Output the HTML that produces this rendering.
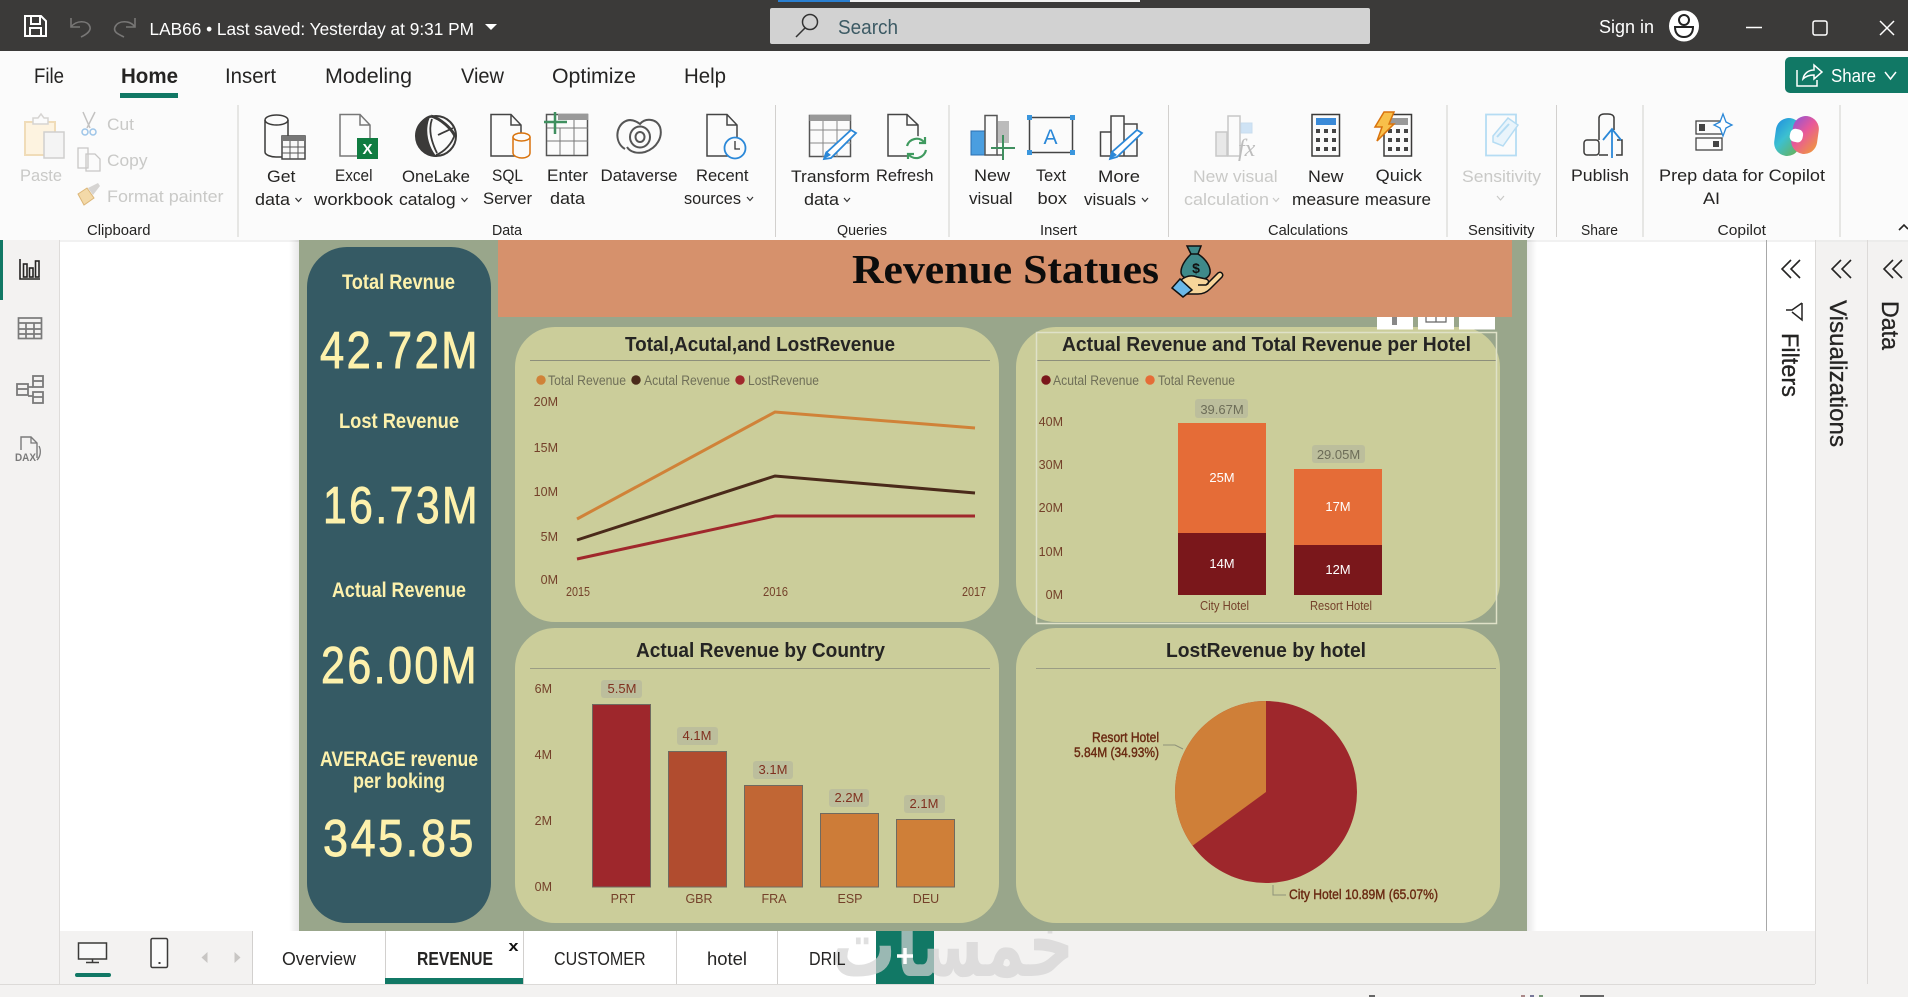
<!DOCTYPE html>
<html lang="en"><head><meta charset="utf-8"><title>LAB66 - Power BI</title>
<style>
html,body{margin:0;padding:0;width:1908px;height:997px;overflow:hidden;background:#f3f2f1}
svg{display:block;font-family:"Liberation Sans",sans-serif}
.rb{font-size:17px;fill:#252423}
.dis{font-size:17px;fill:#c9c9c7}
.gp{font-size:15px;fill:#252423}
.tab{font-size:21px;fill:#252423}
.kt{font-size:21px;font-weight:bold;fill:#fdf1ac}
.kv{font-size:52px;letter-spacing:3px;fill:#fdf1ac;stroke:#fdf1ac;stroke-width:.9}
.ct{font-size:20.5px;font-weight:bold;fill:#252423}
.lg{font-size:14px;fill:#6f6f58}
.ax{font-size:12.5px;fill:#74412a}
.dl{font-size:13px;fill:#80301f}
.ds{font-size:13px;fill:#6d6d58}
.wl{font-size:13px;fill:#fff}
.pl{font-size:13.5px;fill:#6a2a12;stroke:#6a2a12;stroke-width:.4}
.bt{font-size:18px;fill:#252423}
.vt{font-size:24px;fill:#252423;stroke:#252423;stroke-width:.3}
</style></head><body>
<svg width="1908" height="997" viewBox="0 0 1908 997" xmlns="http://www.w3.org/2000/svg">
<defs>
<linearGradient id="sl" x1="0" x2="1"><stop offset="0" stop-color="#000" stop-opacity="0"/><stop offset="1" stop-color="#000" stop-opacity=".09"/></linearGradient>
<linearGradient id="sr" x1="0" x2="1"><stop offset="0" stop-color="#000" stop-opacity=".09"/><stop offset="1" stop-color="#000" stop-opacity="0"/></linearGradient>
<linearGradient id="cp1" x1="0" y1="0" x2="1" y2="1"><stop offset="0" stop-color="#1f8fe0"/><stop offset=".45" stop-color="#3cc0d0"/><stop offset="1" stop-color="#6fb04a"/></linearGradient>
<linearGradient id="cp2" x1="0" y1="0" x2="1" y2="1"><stop offset="0" stop-color="#8a55d8"/><stop offset=".45" stop-color="#e8589a"/><stop offset="1" stop-color="#f0a030"/></linearGradient>
<clipPath id="wm"><rect x="800" y="931" width="300" height="50"/></clipPath>
</defs>

<!-- base regions -->
<rect width="1908" height="997" fill="#f3f2f1"/>
<rect x="60" y="240" width="1755" height="691" fill="#fff"/>
<rect x="1815" y="240" width="93" height="744" fill="#f3f2f1"/>

<!-- title bar -->
<rect width="1908" height="51" fill="#3b3a39"/>
<rect x="778" y="0" width="72" height="2" fill="#2a7fd0"/><rect x="850" y="0" width="290" height="2" fill="#f0f0f0"/>
<g fill="none" stroke="#fff" stroke-width="2">
<path d="M25 16H41L46 21V36H25Z"/><path d="M31 16V24H40V16"/><path d="M30 36V28H41V36"/>
</g>
<g fill="none" stroke="#787776" stroke-width="1.600">
<path d="M71 18V27H80"/><path d="M71 27C76 20 88 20 90 27C91 31 87 34 81 37"/>
<path d="M135 18V27H126"/><path d="M135 27C130 20 118 20 115 27C113 32 118 34 124 37"/>
</g>
<text x="149.500" y="35" font-size="17.500" fill="#fff" textLength="324.500" lengthAdjust="spacingAndGlyphs">LAB66 &#8226; Last saved: Yesterday at 9:31 PM</text>
<path d="M485 24H497L491 30Z" fill="#fff"/>
<rect x="770" y="8" width="600" height="36" rx="2" fill="#d2d2d2"/>
<g fill="none" stroke="#333" stroke-width="1.500"><circle cx="810" cy="22" r="7.500"/><path d="M805 28L796 37"/></g>
<text x="838" y="34" font-size="20" fill="#3c5a64" textLength="60" lengthAdjust="spacingAndGlyphs">Search</text>
<text x="1599" y="33" font-size="18" fill="#fff" textLength="55" lengthAdjust="spacingAndGlyphs">Sign in</text>
<ellipse cx="1684" cy="26" rx="15" ry="15.500" fill="#fff"/>
<circle cx="1684" cy="20" r="5" fill="none" stroke="#222" stroke-width="2"/><path d="M1675 27H1693C1693 34 1689 37 1684 37C1679 37 1675 34 1675 27Z" fill="none" stroke="#222" stroke-width="2"/>
<path d="M1746 27.500H1762" stroke="#fff" stroke-width="1.500"/>
<rect x="1813" y="21" width="14" height="14" rx="2" fill="none" stroke="#fff" stroke-width="1.500"/>
<path d="M1880 21L1894 35M1894 21L1880 35" stroke="#fff" stroke-width="1.500"/>

<!-- ribbon -->
<rect y="51" width="1908" height="189" fill="#fbfbfb"/>
<rect y="240" width="1908" height="2" fill="#e8e8e8" opacity=".6"/>
<text class="tab" x="34" y="83" textLength="30" lengthAdjust="spacingAndGlyphs">File</text>
<text class="tab" x="121" y="83" font-weight="bold" textLength="57" lengthAdjust="spacingAndGlyphs">Home</text>
<rect x="120" y="93" width="58" height="5" fill="#117865"/>
<text class="tab" x="225" y="83" textLength="51" lengthAdjust="spacingAndGlyphs">Insert</text>
<text class="tab" x="325" y="83" textLength="87" lengthAdjust="spacingAndGlyphs">Modeling</text>
<text class="tab" x="461" y="83" textLength="43" lengthAdjust="spacingAndGlyphs">View</text>
<text class="tab" x="552" y="83" textLength="84" lengthAdjust="spacingAndGlyphs">Optimize</text>
<text class="tab" x="684" y="83" textLength="42" lengthAdjust="spacingAndGlyphs">Help</text>
<path d="M1790 57H1908V93H1790A5 5 0 0 1 1785 88V62A5 5 0 0 1 1790 57Z" fill="#117865"/>
<path d="M1797 70V86H1817V80M1803 79C1804 73 1809 70 1814 70V65L1822 72L1814 79V75C1809 75 1806 76 1803 79Z" fill="none" stroke="#fff" stroke-width="1.500"/>
<text x="1831" y="82" font-size="18" fill="#fff" textLength="45" lengthAdjust="spacingAndGlyphs">Share</text>
<path d="M1885 72L1890.500 79L1896 72" fill="none" stroke="#fff" stroke-width="1.500"/>
<path d="M238 105V237M775.500 105V237M949 105V237M1168.500 105V237M1447 105V237M1556.500 105V237M1643 105V237M1840 105V237" stroke="#d2d0ce"/>

<!-- clipboard group -->
<rect x="25" y="122" width="30" height="33" fill="#fdf3e0" stroke="#f0dcb8" stroke-width="2"/>
<path d="M33 122V118H38L41 114L44 118H48V124H33Z" fill="#fbfbfb" stroke="#d6d4d2" stroke-width="1.500"/>
<rect x="44" y="132" width="20" height="26" fill="#f4f4f4" stroke="#d0cfce" stroke-width="1.500"/>
<path d="M83 112L90 128M95 112L87 128" stroke="#c3c2c1" stroke-width="1.500"/>
<circle cx="85" cy="132" r="3" fill="none" stroke="#9ec5e8" stroke-width="1.500"/><circle cx="93" cy="132" r="3" fill="none" stroke="#9ec5e8" stroke-width="1.500"/>
<path d="M78 148H88V168H78ZM86 154H95L100 159V171H86Z" fill="#fbfbfb" stroke="#c8c7c6" stroke-width="1.300"/>
<path d="M78 194L87 188L94 198L84 205Z" fill="#f3d9a8" stroke="#dcb678" stroke-width="1"/><path d="M88 188L98 183L100 186L93 195Z" fill="#d6d4d2"/>
<text class="dis" x="20" y="181" textLength="42" lengthAdjust="spacingAndGlyphs">Paste</text>
<text class="dis" x="107" y="130" textLength="27" lengthAdjust="spacingAndGlyphs">Cut</text>
<text class="dis" x="107" y="166" textLength="40.500" lengthAdjust="spacingAndGlyphs">Copy</text>
<text class="dis" x="107" y="202" textLength="116.500" lengthAdjust="spacingAndGlyphs">Format painter</text>
<text class="gp" x="87" y="235" textLength="63.500" lengthAdjust="spacingAndGlyphs">Clipboard</text>

<!-- data group -->
<g fill="none" stroke="#3b3a39" stroke-width="1.500">
<path d="M265 120V152C265 155 271 157 276 157H282M288 120V136"/><ellipse cx="276.500" cy="120" rx="11.500" ry="5"/>
</g>
<g><rect x="282" y="136" width="23" height="23" fill="#f8f8f8" stroke="#444" stroke-width="1.500"/><rect x="282" y="136" width="23" height="5" fill="#777"/><path d="M290 141V159M298 141V159M282 147H305M282 153H305" stroke="#555"/></g>
<path d="M340 114.500H360L370 125V156H340ZM360 115V125H370" fill="#fbfbfb" stroke="#777" stroke-width="1.500"/>
<rect x="357" y="138" width="21" height="21" fill="#107c41"/><text x="367.500" y="154" font-size="15" font-weight="bold" fill="#fff" text-anchor="middle">X</text>
<circle cx="436" cy="136" r="20" fill="#fbfbfb" stroke="#3b3a39" stroke-width="2"/>
<path d="M431 115C418 118 411 137 420 149C424 154 430 157 437 157C429 148 423 130 431 115Z" fill="#3b3a39"/>
<path d="M431 116C441 119 451 128 455 136" fill="none" stroke="#3b3a39" stroke-width="3"/>
<path d="M436 155C444 152 452 144 455 134M432 119C428 130 432 143 437 153M438 135C444 132 449 130 453 128" fill="none" stroke="#3b3a39" stroke-width="1.800"/>
<path d="M491 114.500H511L521 125V156H491ZM511 115V125H521" fill="#fbfbfb" stroke="#444" stroke-width="1.500"/>
<path d="M513 137V153C513 156 518 158 522 158C526 158 530 156 530 153V137" fill="#fbfbfb" stroke="#d9730d" stroke-width="1.500"/><ellipse cx="521.500" cy="137" rx="8.500" ry="4" fill="#fbfbfb" stroke="#d9730d" stroke-width="1.500"/>
<rect x="546.500" y="114.500" width="41" height="41" fill="#fbfbfb" stroke="#555" stroke-width="1.500"/><rect x="558" y="114" width="30" height="6" fill="#999"/>
<path d="M560 128V155M574 120V155M547 128H588M547 141H588" stroke="#777"/>
<path d="M555 112V134M544 122H567" stroke="#3f8f5f" stroke-width="2.500"/>
<g fill="none" stroke="#555" stroke-width="2">
<path d="M625 149C615 143 615 128 624 122C630 118 636 121 640 124C645 118 656 118 660 127C663 137 657 148 645 152C637 154 630 152 627 147"/>
<ellipse cx="640" cy="137" rx="10" ry="10.500"/><ellipse cx="640" cy="137" rx="4.500" ry="5"/>
</g>
<path d="M707 114.500H727L737 125V156H707ZM727 115V125H737" fill="#fbfbfb" stroke="#444" stroke-width="1.500"/>
<circle cx="735" cy="148" r="10.500" fill="#fbfbfb" stroke="#2b88d8" stroke-width="1.800"/><path d="M735 141V149H740" fill="none" stroke="#333" stroke-width="1.300"/>
<text class="rb" x="267" y="182" textLength="28.400" lengthAdjust="spacingAndGlyphs">Get</text>
<text class="rb" x="255" y="205" textLength="35" lengthAdjust="spacingAndGlyphs">data</text><path d="M295.500 198L298.500 201.500L301.500 198" fill="none" stroke="#333" stroke-width="1.200"/>
<text class="rb" x="335" y="181" textLength="37.500" lengthAdjust="spacingAndGlyphs">Excel</text>
<text class="rb" x="314" y="205" textLength="79" lengthAdjust="spacingAndGlyphs">workbook</text>
<text class="rb" x="402" y="182" textLength="68" lengthAdjust="spacingAndGlyphs">OneLake</text>
<text class="rb" x="399" y="205" textLength="56.600" lengthAdjust="spacingAndGlyphs">catalog</text><path d="M461.500 198L464.500 201.500L467.500 198" fill="none" stroke="#333" stroke-width="1.200"/>
<text class="rb" x="492" y="181" textLength="31" lengthAdjust="spacingAndGlyphs">SQL</text>
<text class="rb" x="483" y="204" textLength="49" lengthAdjust="spacingAndGlyphs">Server</text>
<text class="rb" x="547" y="181" textLength="41" lengthAdjust="spacingAndGlyphs">Enter</text>
<text class="rb" x="550" y="204" textLength="35" lengthAdjust="spacingAndGlyphs">data</text>
<text class="rb" x="600.500" y="181" textLength="77" lengthAdjust="spacingAndGlyphs">Dataverse</text>
<text class="rb" x="696" y="181" textLength="52.500" lengthAdjust="spacingAndGlyphs">Recent</text>
<text class="rb" x="684" y="204" textLength="57" lengthAdjust="spacingAndGlyphs">sources</text><path d="M747 197L750 200.500L753 197" fill="none" stroke="#333" stroke-width="1.200"/>
<text class="gp" x="492" y="235" textLength="30" lengthAdjust="spacingAndGlyphs">Data</text>

<!-- queries -->
<rect x="809.500" y="115.500" width="41" height="41" fill="#fbfbfb" stroke="#555" stroke-width="1.500"/><rect x="809.500" y="115" width="41" height="6" fill="#999"/>
<path d="M823 121V157M837 121V157M810 130H851M810 143H851" stroke="#888"/>
<path d="M851 130L856 133L831 158L824 159L826 153Z" fill="#fff" stroke="#2b88d8" stroke-width="1.800"/><path d="M824 159L826 151L831 155Z" fill="#2b88d8"/>
<path d="M888 114.500H907L918 125V156H888ZM907 115V125H918" fill="#fbfbfb" stroke="#444" stroke-width="1.500"/>
<circle cx="916.500" cy="148" r="12" fill="#fbfbfb"/>
<g fill="none" stroke="#3f9a5f" stroke-width="2.200"><path d="M907 146A10 10 0 0 1 924 142"/><path d="M926 150A10 10 0 0 1 909 155"/><path d="M925 137V143H919M908 159V154H914"/></g>
<text class="rb" x="791" y="182" textLength="79" lengthAdjust="spacingAndGlyphs">Transform</text>
<text class="rb" x="804" y="205" textLength="35" lengthAdjust="spacingAndGlyphs">data</text><path d="M844 198L847 201.500L850 198" fill="none" stroke="#333" stroke-width="1.200"/>
<text class="rb" x="876" y="181" textLength="57.500" lengthAdjust="spacingAndGlyphs">Refresh</text>
<text class="gp" x="837" y="235" textLength="50" lengthAdjust="spacingAndGlyphs">Queries</text>

<!-- insert -->
<rect x="971" y="131" width="14.500" height="24" fill="#4a9ee0" stroke="#2b6fb0"/>
<path d="M985 115.500H997V155H985Z" fill="#fbfbfb" stroke="#555" stroke-width="1.500"/><rect x="998" y="121" width="11" height="22" fill="#bbb"/><path d="M997 155H1004" stroke="#555" stroke-width="1.500"/>
<path d="M1003 135V160M991 148H1015" stroke="#3f8f5f" stroke-width="2"/>
<rect x="1029.500" y="117.500" width="43" height="35" fill="#fbfbfb" stroke="#444" stroke-width="1.500"/>
<g fill="#3a96dd"><rect x="1027" y="115" width="5" height="5"/><rect x="1070" y="115" width="5" height="5"/><rect x="1027" y="150" width="5" height="5"/><rect x="1070" y="150" width="5" height="5"/></g>
<text x="1050.500" y="144" font-size="21" fill="#2b88d8" text-anchor="middle">A</text>
<path d="M1100.500 132H1111V156H1100.500ZM1111 116H1124V156H1111ZM1124 124H1137V156H1124Z" fill="#fbfbfb" stroke="#444" stroke-width="1.500"/>
<path d="M1137 130L1142 133L1117 157L1110 159L1112 152Z" fill="#fff" stroke="#2b88d8" stroke-width="1.800"/><path d="M1110 159L1112 151L1117 155Z" fill="#2b88d8"/>
<text class="rb" x="974" y="181" textLength="36" lengthAdjust="spacingAndGlyphs">New</text>
<text class="rb" x="969" y="204" textLength="43.600" lengthAdjust="spacingAndGlyphs">visual</text>
<text class="rb" x="1036" y="181" textLength="30" lengthAdjust="spacingAndGlyphs">Text</text>
<text class="rb" x="1037.500" y="204" textLength="29.500" lengthAdjust="spacingAndGlyphs">box</text>
<text class="rb" x="1098" y="182" textLength="42" lengthAdjust="spacingAndGlyphs">More</text>
<text class="rb" x="1084" y="205" textLength="52" lengthAdjust="spacingAndGlyphs">visuals</text><path d="M1142 198L1145 201.500L1148 198" fill="none" stroke="#333" stroke-width="1.200"/>
<text class="gp" x="1040" y="235" textLength="37" lengthAdjust="spacingAndGlyphs">Insert</text>

<!-- calculations -->
<rect x="1216" y="132" width="11" height="24" fill="#e8e8e8" stroke="#c8c8c8" stroke-width="1.500"/>
<rect x="1228" y="116" width="12" height="40" fill="#fbfbfb" stroke="#c8c8c8" stroke-width="1.500"/>
<path d="M1241 123H1252V133H1241Z" fill="#cfe3f5" stroke="#c8dcee"/>
<text x="1238" y="156" font-size="24" font-family="Liberation Serif" font-style="italic" fill="#bdbdbd">fx</text>
<rect x="1312" y="114.500" width="27.500" height="41.500" fill="#fbfbfb" stroke="#3b3a39" stroke-width="1.500"/><rect x="1316" y="118" width="20" height="7" fill="#3a8ad8"/>
<g fill="#444"><rect x="1316" y="129" width="4" height="4"/><rect x="1324" y="129" width="4" height="4"/><rect x="1332" y="129" width="4" height="4"/><rect x="1316" y="138" width="4" height="4"/><rect x="1324" y="138" width="4" height="4"/><rect x="1332" y="138" width="4" height="4"/><rect x="1316" y="147" width="4" height="4"/><rect x="1324" y="147" width="4" height="4"/><rect x="1332" y="147" width="4" height="4"/></g>
<rect x="1384" y="114.500" width="27.500" height="41.500" fill="#fbfbfb" stroke="#3b3a39" stroke-width="1.500"/><rect x="1388" y="118" width="20" height="7" fill="#999"/>
<g fill="#444"><rect x="1388" y="129" width="4" height="4"/><rect x="1396" y="129" width="4" height="4"/><rect x="1404" y="129" width="4" height="4"/><rect x="1388" y="138" width="4" height="4"/><rect x="1396" y="138" width="4" height="4"/><rect x="1404" y="138" width="4" height="4"/><rect x="1388" y="147" width="4" height="4"/><rect x="1396" y="147" width="4" height="4"/><rect x="1404" y="147" width="4" height="4"/></g>
<path d="M1384 112H1394L1389 124H1394L1377 141L1382 127H1375Z" fill="#f8c04a" stroke="#d9730d" stroke-width="1.500"/>
<text class="dis" x="1193" y="182" textLength="84.600" lengthAdjust="spacingAndGlyphs">New visual</text>
<text class="dis" x="1184" y="205" textLength="85" lengthAdjust="spacingAndGlyphs">calculation</text><path d="M1273 198L1276 201.500L1279 198" fill="none" stroke="#c9c9c7" stroke-width="1.200"/>
<text class="rb" x="1308" y="182" textLength="35.500" lengthAdjust="spacingAndGlyphs">New</text>
<text class="rb" x="1292" y="205" textLength="67.600" lengthAdjust="spacingAndGlyphs">measure</text>
<text class="rb" x="1375.700" y="181" textLength="46.300" lengthAdjust="spacingAndGlyphs">Quick</text>
<text class="rb" x="1364.700" y="205" textLength="66.300" lengthAdjust="spacingAndGlyphs">measure</text>
<text class="gp" x="1268" y="235" textLength="80" lengthAdjust="spacingAndGlyphs">Calculations</text>

<!-- sensitivity/share/copilot -->
<path d="M1486 114.500H1516V155.500H1486Z" fill="#fbfbfb" stroke="#b5dcf3" stroke-width="1.800"/>
<path d="M1493 136L1508 118L1518 125L1503 146L1493 142Z" fill="#e9f4fb" stroke="#b5dcf3" stroke-width="1.500"/>
<path d="M1497 137L1509 124" stroke="#b5dcf3" stroke-width="2"/>
<text class="dis" x="1462" y="182" textLength="79" lengthAdjust="spacingAndGlyphs">Sensitivity</text>
<path d="M1497 196L1500.500 200L1504 196" fill="none" stroke="#c9c9c7" stroke-width="1.200"/>
<text class="gp" x="1468" y="235" textLength="66.500" lengthAdjust="spacingAndGlyphs">Sensitivity</text>
<g fill="none" stroke="#3b3a39" stroke-width="1.500">
<rect x="1584" y="140" width="15" height="15" rx="3"/><path d="M1599 140V118C1599 115 1602 114 1604 114H1608C1611 114 1614 115 1614 118V130"/><path d="M1599 155H1608M1617 140H1622V155H1616"/>
</g>
<path d="M1612 158V130M1603 140L1612 129L1621 140" fill="none" stroke="#2b88d8" stroke-width="1.800"/>
<text class="rb" x="1571" y="181" textLength="58" lengthAdjust="spacingAndGlyphs">Publish</text>
<text class="gp" x="1581" y="235" textLength="37" lengthAdjust="spacingAndGlyphs">Share</text>
<rect x="1696" y="121" width="26" height="13" fill="#fbfbfb" stroke="#444" stroke-width="1.300"/><rect x="1699" y="124" width="6" height="7" fill="#444"/>
<rect x="1696" y="138" width="26" height="12" fill="#fbfbfb" stroke="#444" stroke-width="1.300"/><rect x="1713" y="141" width="6" height="6" fill="#444"/>
<path d="M1723 114L1726 122L1732 125L1726 128L1723 136L1720 128L1714 125L1720 122Z" fill="#fff" stroke="#2b88d8" stroke-width="1.300"/>
<rect x="1775" y="118" width="26" height="38" rx="13" fill="url(#cp1)" transform="rotate(8 1788 137)"/>
<rect x="1792" y="116" width="26" height="38" rx="13" fill="url(#cp2)" transform="rotate(8 1805 135)"/>
<rect x="1790" y="129" width="13" height="13" rx="5" fill="#fff" transform="rotate(12 1796 135)"/>
<text class="rb" x="1659" y="181" textLength="166" lengthAdjust="spacingAndGlyphs">Prep data for Copilot</text>
<text class="rb" x="1703" y="204" textLength="17" lengthAdjust="spacingAndGlyphs">AI</text>
<text class="gp" x="1717.500" y="235" textLength="48.500" lengthAdjust="spacingAndGlyphs">Copilot</text>
<path d="M1899 230L1904 225L1908 229" fill="none" stroke="#252423" stroke-width="1.600"/>

<!-- left nav -->
<rect y="240" width="59" height="744" fill="#f3f2f1"/><path d="M59.500 240V984" stroke="#dedcda"/>
<rect y="240" width="3" height="60" fill="#117865"/>
<g fill="none" stroke="#252423" stroke-width="1.600"><path d="M20 259V279H40"/><rect x="23.500" y="264" width="3.500" height="13"/><rect x="29.500" y="268" width="3.500" height="9"/><rect x="35.500" y="261" width="3.500" height="16"/></g>
<g fill="none" stroke="#7a7a7a" stroke-width="1.700"><rect x="18.500" y="318" width="23" height="20.500"/><path d="M18.500 323H41.500M18.500 329H41.500M18.500 334H41.500M26 323V338M34 323V338" /></g>
<g fill="none" stroke="#7a7a7a" stroke-width="1.800"><rect x="17" y="384" width="11" height="11"/><path d="M17 389H28"/><rect x="33" y="376" width="10" height="11"/><path d="M33 381H43"/><rect x="33" y="392" width="10" height="11"/><path d="M33 397H43M28 387H33M28 396H33"/></g>
<path d="M21 450V437H31L37 443V458" fill="none" stroke="#7a7a7a" stroke-width="1.400"/><path d="M31 437V443H37M39 446C41 450 41 456 37 460" fill="none" stroke="#7a7a7a" stroke-width="1.300"/>
<text x="15" y="461" font-size="11" font-weight="bold" fill="#7a7a7a" textLength="21" lengthAdjust="spacingAndGlyphs">DAX</text>

<!-- report page -->
<rect x="289" y="240" width="10" height="691" fill="url(#sl)"/>
<rect x="1527" y="240" width="10" height="691" fill="url(#sr)"/>
<rect x="299" y="240" width="1228" height="691" fill="#99a68b"/>
<rect x="307" y="247" width="184" height="676" rx="40" fill="#355a64"/>
<rect x="498" y="240" width="1014" height="77" fill="#d6916c"/>
<text x="852" y="283" font-family="Liberation Serif,serif" font-size="41.500" font-weight="bold" fill="#0c0c0c" textLength="307" lengthAdjust="spacingAndGlyphs">Revenue Statues</text>

<!-- money icon -->
<path d="M1187 246H1201L1198 254C1206 259 1211 267 1210 273C1209 278 1204 280 1196 280C1187 280 1181 277 1181 272C1181 266 1186 259 1191 254Z" fill="#3f8a8a" stroke="#111" stroke-width="1.500"/>
<path d="M1190 254H1198" stroke="#111" stroke-width="1.500"/>
<text x="1196" y="273" font-size="14" font-weight="bold" fill="#111" text-anchor="middle">$</text>
<path d="M1181 280C1187 275 1192 275 1197 277L1206 279C1210 280 1209 285 1205 285H1198H1206L1218 273C1221 271 1224 274 1222 277L1210 289C1206 293 1202 294 1198 294H1187Z" fill="#f6d59a" stroke="#111" stroke-width="1.500"/>
<path d="M1172 288L1180 279L1192 290L1183 297Z" fill="#6bb8e8" stroke="#111" stroke-width="1.500"/>

<!-- KPI texts -->
<text class="kt" x="342" y="289" textLength="113" lengthAdjust="spacingAndGlyphs">Total Revnue</text>
<text class="kv" x="320" y="368" textLength="160" lengthAdjust="spacingAndGlyphs">42.72M</text>
<text class="kt" x="339" y="428" textLength="120" lengthAdjust="spacingAndGlyphs">Lost Revenue</text>
<text class="kv" x="323" y="523" textLength="157" lengthAdjust="spacingAndGlyphs">16.73M</text>
<text class="kt" x="332" y="597" textLength="134" lengthAdjust="spacingAndGlyphs">Actual Revenue</text>
<text class="kv" x="321" y="683" textLength="158" lengthAdjust="spacingAndGlyphs">26.00M</text>
<text class="kt" x="320" y="766" textLength="158" lengthAdjust="spacingAndGlyphs">AVERAGE revenue</text>
<text class="kt" x="353" y="788" textLength="92" lengthAdjust="spacingAndGlyphs">per boking</text>
<text class="kv" x="323" y="856" textLength="153" lengthAdjust="spacingAndGlyphs">345.85</text>

<!-- cards -->
<rect x="515" y="327" width="484" height="295" rx="40" fill="#cbcd9a"/>
<rect x="1016" y="327" width="484" height="295" rx="40" fill="#cbcd9a"/>
<rect x="515" y="628" width="484" height="295" rx="40" fill="#cbcd9a"/>
<rect x="1016" y="628" width="484" height="295" rx="40" fill="#cbcd9a"/>

<!-- chart 1 -->
<text class="ct" x="625" y="351" textLength="270" lengthAdjust="spacingAndGlyphs">Total,Acutal,and LostRevenue</text>
<path d="M530 360.500H990" stroke="#8d8f7b"/>
<circle cx="541" cy="380" r="4.700" fill="#d08238"/><text class="lg" x="548" y="385" textLength="78" lengthAdjust="spacingAndGlyphs">Total Revenue</text>
<circle cx="636" cy="380" r="4.700" fill="#4a2a1a"/><text class="lg" x="644" y="385" textLength="86" lengthAdjust="spacingAndGlyphs">Acutal Revenue</text>
<circle cx="740" cy="380" r="4.700" fill="#a0282c"/><text class="lg" x="748" y="385" textLength="71" lengthAdjust="spacingAndGlyphs">LostRevenue</text>
<g text-anchor="end"><text class="ax" x="558" y="406">20M</text><text class="ax" x="558" y="452">15M</text><text class="ax" x="558" y="496">10M</text><text class="ax" x="558" y="541">5M</text><text class="ax" x="558" y="584">0M</text></g>
<text class="ax" x="566" y="596" textLength="24" lengthAdjust="spacingAndGlyphs">2015</text><text class="ax" x="763" y="596" textLength="25" lengthAdjust="spacingAndGlyphs">2016</text><text class="ax" x="962" y="596" textLength="24" lengthAdjust="spacingAndGlyphs">2017</text>
<g fill="none" stroke-width="3">
<path d="M577 519L775 412L975 428" stroke="#d08238"/>
<path d="M577 540L775 476L975 493" stroke="#4a2a1a"/>
<path d="M577 559L775 516L975 516" stroke="#a0282c"/>
</g>

<!-- chart 2 -->
<text class="ct" x="1062" y="351" textLength="409" lengthAdjust="spacingAndGlyphs">Actual Revenue and Total Revenue per Hotel</text>
<path d="M1036 360.500H1496" stroke="#8d8f7b"/>
<circle cx="1046" cy="380" r="4.700" fill="#7a171b"/><text class="lg" x="1053" y="385" textLength="86" lengthAdjust="spacingAndGlyphs">Acutal Revenue</text>
<circle cx="1150" cy="380" r="4.700" fill="#e56c37"/><text class="lg" x="1158" y="385" textLength="77" lengthAdjust="spacingAndGlyphs">Total Revenue</text>
<g text-anchor="end"><text class="ax" x="1063" y="426">40M</text><text class="ax" x="1063" y="469">30M</text><text class="ax" x="1063" y="512">20M</text><text class="ax" x="1063" y="556">10M</text><text class="ax" x="1063" y="599">0M</text></g>
<rect x="1178" y="423" width="88" height="110" fill="#e56c37"/><rect x="1178" y="533" width="88" height="62" fill="#7a171b"/>
<rect x="1294" y="469" width="88" height="76" fill="#e56c37"/><rect x="1294" y="545" width="88" height="50" fill="#7a171b"/>
<rect x="1195" y="399" width="53" height="19" rx="3" fill="#bcbe9c"/><text class="ds" x="1222" y="414" text-anchor="middle">39.67M</text>
<rect x="1312" y="445" width="53" height="18" rx="3" fill="#bcbe9c"/><text class="ds" x="1338.500" y="459" text-anchor="middle">29.05M</text>
<g text-anchor="middle"><text class="wl" x="1222" y="482">25M</text><text class="wl" x="1222" y="568">14M</text><text class="wl" x="1338" y="511">17M</text><text class="wl" x="1338" y="574">12M</text></g>
<text class="ax" x="1200" y="610" textLength="49" lengthAdjust="spacingAndGlyphs">City Hotel</text><text class="ax" x="1310" y="610" textLength="62" lengthAdjust="spacingAndGlyphs">Resort Hotel</text>
<rect x="1036.500" y="332.500" width="460" height="291" fill="none" stroke="#dfe1c8" stroke-width="1.500"/>
<rect x="1377" y="317" width="36" height="12.500" fill="#fff"/><rect x="1418" y="317" width="36" height="12.500" fill="#fff"/><rect x="1459" y="317" width="36" height="12.500" fill="#fff"/>
<rect x="1392" y="317" width="5" height="8" fill="#888"/><path d="M1426 317V322H1446V317M1436 317V322" fill="none" stroke="#666" stroke-width="1.200"/>

<!-- chart 3 -->
<text class="ct" x="636" y="657" textLength="249" lengthAdjust="spacingAndGlyphs">Actual Revenue by Country</text>
<path d="M530 668.500H990" stroke="#9b9d84"/>
<g text-anchor="end"><text class="ax" x="552" y="693">6M</text><text class="ax" x="552" y="759">4M</text><text class="ax" x="552" y="825">2M</text><text class="ax" x="552" y="891">0M</text></g>
<g stroke="#6f6a5f" stroke-width="1">
<rect x="592.500" y="704.500" width="58" height="182.500" fill="#9e272c"/>
<rect x="668.500" y="751.500" width="58" height="135.500" fill="#b14c2f"/>
<rect x="744.500" y="785.500" width="58" height="101.500" fill="#c16634"/>
<rect x="820.500" y="813.500" width="58" height="73.500" fill="#cd7c38"/>
<rect x="896.500" y="819.500" width="58" height="67.500" fill="#cf7f38"/>
</g>
<g fill="#bcbe9c"><rect x="601" y="680" width="41" height="18" rx="3"/><rect x="677" y="727" width="41" height="18" rx="3"/><rect x="753" y="761" width="40" height="18" rx="3"/><rect x="829" y="789" width="40" height="18" rx="3"/><rect x="904" y="795" width="41" height="18" rx="3"/></g>
<g text-anchor="middle"><text class="dl" x="622" y="693">5.5M</text><text class="dl" x="697" y="740">4.1M</text><text class="dl" x="773" y="774">3.1M</text><text class="dl" x="849" y="802">2.2M</text><text class="dl" x="924" y="808">2.1M</text>
<text class="ax" x="623" y="903">PRT</text><text class="ax" x="699" y="903">GBR</text><text class="ax" x="774" y="903">FRA</text><text class="ax" x="850" y="903">ESP</text><text class="ax" x="926" y="903">DEU</text></g>

<!-- chart 4 -->
<text class="ct" x="1166" y="657" textLength="200" lengthAdjust="spacingAndGlyphs">LostRevenue by hotel</text>
<path d="M1036 668.500H1496" stroke="#9b9d84"/>
<circle cx="1266" cy="792" r="91" fill="#9e272c"/>
<path d="M1266 792V701A91 91 0 0 0 1192.500 845.700Z" fill="#cf7f38"/>
<text class="pl" x="1092" y="742" textLength="67" lengthAdjust="spacingAndGlyphs">Resort Hotel</text>
<text class="pl" x="1074" y="757" textLength="85" lengthAdjust="spacingAndGlyphs">5.84M (34.93%)</text>
<text class="pl" x="1289" y="899" textLength="149" lengthAdjust="spacingAndGlyphs">City Hotel 10.89M (65.07%)</text>
<path d="M1163 745H1175L1183 749M1273 885V895H1286" fill="none" stroke="#8f927a"/>

<!-- filters/vis/data panes -->
<path d="M1766.500 240V931" stroke="#a8a8a8"/>
<path d="M1815.500 240V984M1867.500 240V984" stroke="#dcdad8"/>
<g fill="none" stroke="#252423" stroke-width="1.600">
<path d="M1791 260L1782 269L1791 278M1800 260L1791 269L1800 278"/>
<path d="M1841 260L1832 269L1841 278M1851 260L1842 269L1851 278"/>
<path d="M1893 260L1884 269L1893 278M1902 260L1893 269L1902 278"/>
<path d="M1802 303L1792 310H1786M1802 303V320L1792 312" stroke-width="1.500"/>
</g>
<text class="vt" transform="translate(1782,333) rotate(90)" textLength="64" lengthAdjust="spacingAndGlyphs">Filters</text>
<text class="vt" transform="translate(1830,300) rotate(90)" textLength="147" lengthAdjust="spacingAndGlyphs">Visualizations</text>
<text class="vt" transform="translate(1882,301) rotate(90)" textLength="49" lengthAdjust="spacingAndGlyphs">Data</text>

<!-- bottom tabs -->
<rect x="60" y="931" width="1755" height="53" fill="#f3f2f1"/>
<rect x="252" y="931" width="624" height="53" fill="#fff"/>
<path d="M252.500 931V984M385.500 931V984M523.500 931V984M676.500 931V984M777.500 931V984" stroke="#d2d0ce"/>
<rect x="385" y="978" width="138" height="6" fill="#117865"/>
<rect x="876" y="931" width="58" height="53" fill="#117865"/>
<path d="M0 984.500H1815" stroke="#dcdad8"/>
<g clip-path="url(#wm)"><text transform="translate(953,976) scale(1,1.450)" x="0" y="0" font-family="DejaVu Sans,sans-serif" font-size="64" font-weight="bold" fill="#d4d4d4" opacity=".7" text-anchor="middle" direction="rtl">&#1582;&#1605;&#1587;&#1575;&#1578;</text></g>
<rect x="78.500" y="943" width="28" height="16" fill="#f8f8f8" stroke="#3b3a39" stroke-width="1.500"/><path d="M92.500 959V962M86 962.500H99" stroke="#3b3a39" stroke-width="1.500"/>
<rect x="75" y="973" width="36" height="4" rx="2" fill="#117865"/>
<rect x="151" y="938.500" width="16.500" height="29" rx="1.500" fill="#fbfbfb" stroke="#3b3a39" stroke-width="1.500"/><rect x="158.500" y="962" width="2" height="2" fill="#3b3a39"/>
<path d="M207.500 952L201.500 957.500L207.500 963Z" fill="#c8c6c4"/><path d="M234.500 952L240.500 957.500L234.500 963Z" fill="#c8c6c4"/>
<text class="bt" x="282" y="965" textLength="74" lengthAdjust="spacingAndGlyphs">Overview</text>
<text class="bt" x="417" y="965" font-weight="bold" textLength="76" lengthAdjust="spacingAndGlyphs">REVENUE</text>
<text x="508.500" y="951" font-size="15" font-weight="bold" fill="#111" textLength="10" lengthAdjust="spacingAndGlyphs">x</text>
<text class="bt" x="554" y="965" textLength="91.600" lengthAdjust="spacingAndGlyphs">CUSTOMER</text>
<text class="bt" x="707" y="965" textLength="40" lengthAdjust="spacingAndGlyphs">hotel</text>
<text class="bt" x="809" y="965" textLength="36.600" lengthAdjust="spacingAndGlyphs">DRIL</text>
<path d="M905 948V964M897 956H913" stroke="#fff" stroke-width="3.500"/>

<!-- status bar bits -->
<rect x="1369" y="995" width="6" height="2" fill="#666"/>
<rect x="1521" y="995" width="4" height="2" fill="#a88"/><rect x="1530" y="995" width="4" height="2" fill="#779"/><rect x="1539" y="995" width="4" height="2" fill="#797"/>
<rect x="1580" y="995" width="24" height="2" fill="#666"/>
</svg>
</body></html>
